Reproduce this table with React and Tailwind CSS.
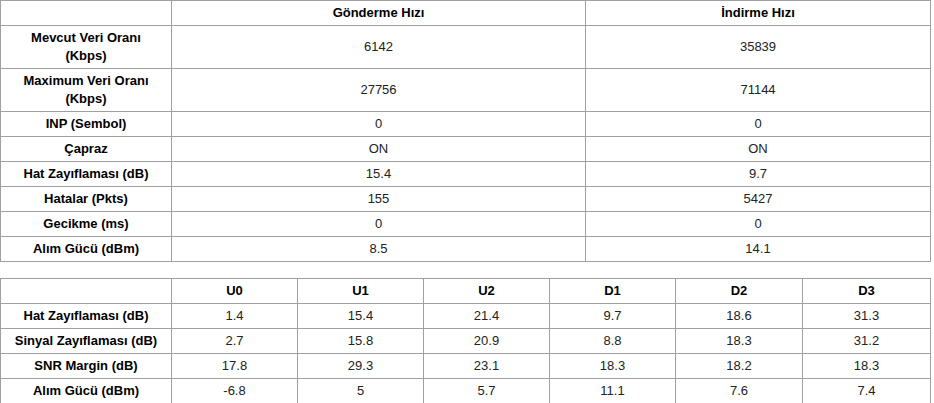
import React from 'react';

const summaryRows = [
  { label: ['Mevcut Veri Oranı', '(Kbps)'], up: '6142', down: '35839' },
  { label: ['Maximum Veri Oranı', '(Kbps)'], up: '27756', down: '71144' },
  { label: ['INP (Sembol)'], up: '0', down: '0' },
  { label: ['Çapraz'], up: 'ON', down: 'ON' },
  { label: ['Hat Zayıflaması (dB)'], up: '15.4', down: '9.7' },
  { label: ['Hatalar (Pkts)'], up: '155', down: '5427' },
  { label: ['Gecikme (ms)'], up: '0', down: '0' },
  { label: ['Alım Gücü (dBm)'], up: '8.5', down: '14.1' },
];

const bands = ['U0', 'U1', 'U2', 'D1', 'D2', 'D3'];

const bandRows = [
  { label: 'Hat Zayıflaması (dB)', values: ['1.4', '15.4', '21.4', '9.7', '18.6', '31.3'] },
  { label: 'Sinyal Zayıflaması (dB)', values: ['2.7', '15.8', '20.9', '8.8', '18.3', '31.2'] },
  { label: 'SNR Margin (dB)', values: ['17.8', '29.3', '23.1', '18.3', '18.2', '18.3'] },
  { label: 'Alım Gücü (dBm)', values: ['-6.8', '5', '5.7', '11.1', '7.6', '7.4'] },
];

const cell = 'border border-[#a0a0a0] px-1 py-[3px] text-center leading-[18px]';

const App = () => {
  return (
    <div className="w-[934px] bg-white text-[13px] text-[#222]" style={{ fontFamily: '"Liberation Sans", Arial, sans-serif' }}>
      {/* Line summary */}
      <table className="w-[930px] table-fixed border-collapse">
        <colgroup>
          <col className="w-[171px]" />
          <col className="w-[414px]" />
          <col className="w-[345px]" />
        </colgroup>
        <thead>
          <tr>
            <th className={cell}></th>
            <th className={cell + ' font-bold text-black'}>Gönderme Hızı</th>
            <th className={cell + ' font-bold text-black'}>İndirme Hızı</th>
          </tr>
        </thead>
        <tbody>
          {summaryRows.map((row) => (
            <tr key={row.label[0]}>
              <td className={cell + ' font-bold text-black'}>
                {row.label.map((line) => (
                  <div key={line}>{line}</div>
                ))}
              </td>
              <td className={cell}>{row.up}</td>
              <td className={cell}>{row.down}</td>
            </tr>
          ))}
        </tbody>
      </table>

      {/* Per-band values */}
      <table className="mt-4 w-[930px] table-fixed border-collapse">
        <colgroup>
          <col className="w-[171px]" />
          <col className="w-[126px]" />
          <col className="w-[126px]" />
          <col className="w-[126px]" />
          <col className="w-[126px]" />
          <col className="w-[127px]" />
          <col className="w-[128px]" />
        </colgroup>
        <thead>
          <tr>
            <th className={cell}></th>
            {bands.map((b) => (
              <th key={b} className={cell + ' font-bold text-black'}>{b}</th>
            ))}
          </tr>
        </thead>
        <tbody>
          {bandRows.map((row) => (
            <tr key={row.label}>
              <td className={cell + ' font-bold text-black'}>{row.label}</td>
              {row.values.map((v, i) => (
                <td key={i} className={cell}>{v}</td>
              ))}
            </tr>
          ))}
        </tbody>
      </table>
    </div>
  );
};

export default App;
